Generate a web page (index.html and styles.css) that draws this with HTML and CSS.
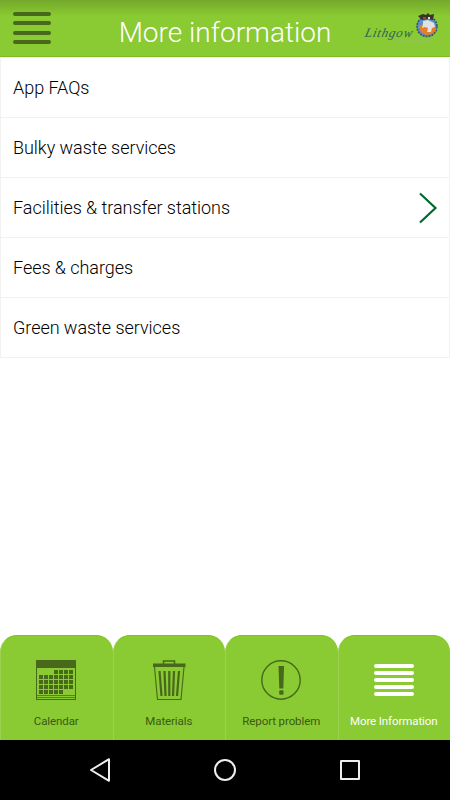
FILE: index.html
```html
<!DOCTYPE html>
<html lang="en">
<head>
    <meta charset="UTF-8">
    <meta name="viewport" content="width=device-width, initial-scale=1.0">
    <title>More information</title>
    <link rel="stylesheet" href="styles.css">
</head>
<body>
    <div class="header">
        <button class="menu-button" aria-label="Menu">
            <span></span>
            <span></span>
            <span></span>
            <span></span>
        </button>
        <h1>More information</h1>
        <div class="logo">
            <span class="logo-name">Lithgow</span>
            <span class="logo-sub">CITY COUNCIL</span>
            <svg class="logo-crest" width="24" height="26" viewBox="0 0 24 26">
                <circle cx="12" cy="14.5" r="10" fill="#5d8fc8" stroke="#34506b" stroke-width="1.6" stroke-dasharray="2 1"/>
                <path d="M4 14l6-2 10 1 1 5-4 4-6 1-5-3z" fill="#e87d26"/>
                <path d="M8 9l5-1 6 3 1 4-3 1-1 4-4 0 1-4-3-1-3 1 1-4z" fill="#dfe3e0"/>
                <path d="M3 4l5-2 3 1 2-2 2 2 4-1-1 6-5-1-6 1z" fill="#38332c"/>
                <path d="M8 5h3v2H8z" fill="#a9432c"/>
                <path d="M13 5h2v2h-2z" fill="#dfe3e0"/>
            </svg>
        </div>
    </div>

    <ul class="list">
        <li>App FAQs</li>
        <li>Bulky waste services</li>
        <li>Facilities &amp; transfer stations
            <svg width="20" height="32" viewBox="0 0 20 32">
                <path d="M2 1.500l15.500 14.500L2 30.500" fill="none" stroke="#00692f" stroke-width="2.200"/>
            </svg>
        </li>
        <li>Fees &amp; charges</li>
        <li>Green waste services</li>
    </ul>

    <div class="tabs">
        <a class="tab">
            <svg width="40" height="40" viewBox="0 0 40 40">
                <rect x=".5" y=".5" width="39" height="39" fill="none" stroke="#48681c"/>
                <path d="M0 0h40v8H0z" fill="#48681c"/>
                <path d="M1 35.5h38M1 37.5h38" stroke="#5b8123"/>
                <g stroke="#48681c" stroke-width="4" stroke-dasharray="4 1">
                    <path d="M18 12h19"/>
                    <path d="M3 17h14M18 17h19"/>
                    <path d="M3 22h34"/>
                    <path d="M3 27h34"/>
                    <path d="M3 32h24"/>
                </g>
            </svg>
            <span>Calendar</span>
        </a>
        <a class="tab">
            <svg width="40" height="40" viewBox="0 0 40 40">
                <path d="M14.5 4V1h11v3" fill="none" stroke="#48681c" stroke-width="1.5"/>
                <path d="M4 3.5h32.5V7H4z" fill="#48681c"/>
                <path d="M5.5 7l3 32.5h23.5L35 7" fill="none" stroke="#48681c" stroke-width="1.1"/>
                <path d="M10.5 11l2 25M15.5 11l1 25M20.3 11v25M25 11l-1 25M30 11l-2 25" stroke="#48681c" stroke-width="2.2"/>
            </svg>
            <span>Materials</span>
        </a>
        <a class="tab">
            <svg width="40" height="40" viewBox="0 0 40 40">
                <circle cx="20" cy="20" r="19.2" fill="none" stroke="#48681c" stroke-width="1.4"/>
                <path d="M17.5 6h5.500l-.7 22.500h-4z" fill="#48681c"/>
                <rect x="18.2" y="30.3" width="4.3" height="4.5" rx="1" fill="#48681c"/>
            </svg>
            <span>Report problem</span>
        </a>
        <a class="tab active">
            <svg width="40" height="40" viewBox="0 0 40 40">
                <path d="M2 6h36M2 13h36M2 20h36M2 27h36M2 34h36" stroke="#fff" stroke-width="4" stroke-linecap="round"/>
            </svg>
            <span>More Information</span>
        </a>
    </div>

    <div class="nav-bar">
        <svg width="26" height="26" viewBox="0 0 26 26">
            <path d="M22 2.200v21.600L4 13z" fill="none" stroke="#eee" stroke-width="2" stroke-linejoin="round"/>
        </svg>
        <svg width="26" height="26" viewBox="0 0 26 26">
            <circle cx="13" cy="13" r="10" fill="none" stroke="#eee" stroke-width="2"/>
        </svg>
        <svg width="26" height="26" viewBox="0 0 26 26">
            <rect x="4" y="4" width="18" height="18" fill="none" stroke="#eee" stroke-width="2" stroke-linejoin="round"/>
        </svg>
    </div>
</body>
</html>
```

FILE: styles.css
```css
* {
    box-sizing: border-box;
}
body {
    display: flex;
    flex-direction: column;
    height: 100vh;
    margin: 0;
    background-color: #fff;
    font-family: Roboto, "Open Sans", sans-serif;
    font-weight: 300;
}
.header {
    display: grid;
    grid-template-columns: 85px 1fr 85px;
    height: 57px;
    background: linear-gradient(#74a82b, #8aca32 16px);
    border-bottom: 1px solid #7dbc1c;
}
.header h1 {
    margin: 0;
    padding-top: 16px;
    color: #fff;
    font-size: 28px;
    font-weight: 300;
    line-height: 34px;
    text-align: center;
    white-space: nowrap;
}
.menu-button {
    display: flex;
    flex-direction: column;
    gap: 5.3px;
    padding: 12px 0 0 13px;
    border: none;
    background: none;
}
.menu-button span {
    width: 38px;
    height: 4px;
    border-radius: 2px;
    background-color: #48681c;
}

/* council logo, the words sit partly under the crest */
.logo {
    position: relative;
}
.logo-name {
    position: absolute;
    top: 27px;
    left: 0;
    color: #2f6058;
    font-family: "Liberation Serif", serif;
    font-size: 13px;
    font-style: italic;
    line-height: 12px;
    letter-spacing: 0.8px;
    transform: skewX(-12deg);
}
.logo-sub {
    position: absolute;
    top: 39px;
    left: 29px;
    color: #a4bd80;
    font-size: 6px;
    line-height: 6px;
    white-space: nowrap;
}
.logo-crest {
    position: absolute;
    top: 12px;
    left: 50px;
}

.list {
    margin: 0;
    padding: 0;
    list-style: none;
    border: 1px solid #f2f2f2;
    border-bottom: none;
}
.list li {
    display: flex;
    align-items: center;
    justify-content: space-between;
    height: 60px;
    padding: 0 11px 0 12px;
    border-bottom: 1px solid #f2f2f2;
    color: #000;
    font-size: 18px;
    letter-spacing: -0.04px;
}

.tabs {
    display: flex;
    height: 105px;
    margin-top: auto;
}
.tab {
    display: flex;
    flex: 1;
    flex-direction: column;
    align-items: center;
    padding: 24px 1px 0 0;
    border: 1px solid #9bd150;
    border-width: 1px 0 0 1px;
    border-top-color: #7fc51b;
    border-radius: 17px 17px 0 0;
    background-color: #8aca32;
    color: #3b5a14;
    font-size: 11.5px;
    font-weight: 400;
    letter-spacing: -0.1px;
    white-space: nowrap;
}
.tab span {
    margin-top: 13px;
    line-height: 16px;
}
.tab.active {
    color: #fff;
}

.nav-bar {
    display: flex;
    align-items: center;
    justify-content: space-between;
    height: 60px;
    padding: 0 87px;
    background-color: #000;
}
```
